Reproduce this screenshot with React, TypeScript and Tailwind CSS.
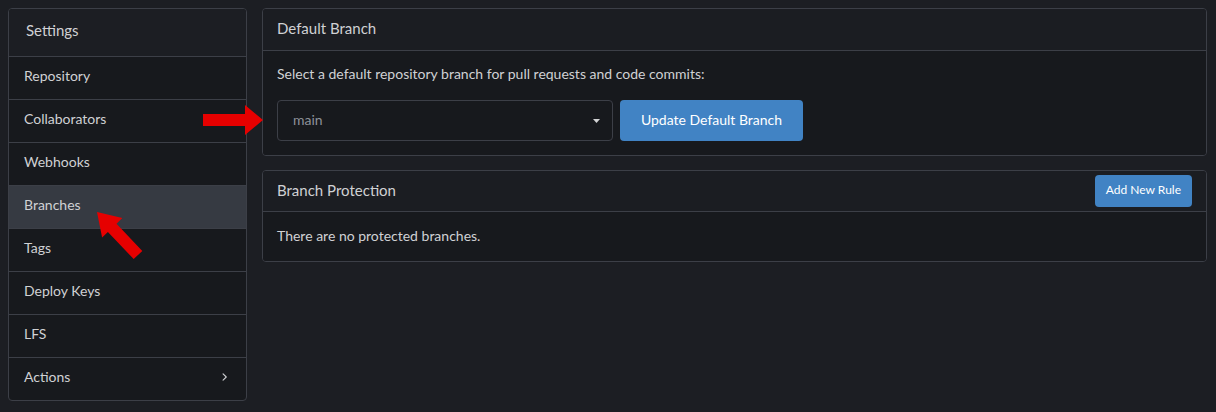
import React from 'react';

const menu = ['Repository', 'Collaborators', 'Webhooks', 'Branches', 'Tags', 'Deploy Keys', 'LFS'];

function ChevronRight() {
  return (
    <svg width="12" height="12" viewBox="0 0 16 16" fill="currentColor">
      <path d="M6.22 3.22a.75.75 0 0 1 1.06 0l4.25 4.25a.75.75 0 0 1 0 1.06l-4.25 4.25a.75.75 0 0 1-1.06-1.06L9.94 8 6.22 4.28a.75.75 0 0 1 0-1.06Z" />
    </svg>
  );
}

export default function App() {
  return (
    <div
      className="relative min-h-[412px] bg-[#1c1e23] text-[#d0d1d4] flex items-start gap-[15px] pl-2 pt-2 pr-[9px]"
      style={{ fontFamily: 'Lato, "Noto Sans", sans-serif' }}
    >
      {/* Sidebar */}
      <div className="w-[239px] shrink-0 border border-[#3c3f47] rounded-[4px] overflow-hidden bg-[#17191d]">
        <div className="h-[47px] flex items-center pl-[17px] pb-[4px] text-[15px] bg-[#1c1e23]">Settings</div>
        {menu.map(item => (
          <div
            key={item}
            className={
              'h-[43px] border-t border-[#3c3f47] flex items-center pl-[15px] pb-[5px] text-[14px] ' +
              (item === 'Branches' ? 'bg-[#363a42]' : '')
            }
          >
            {item}
          </div>
        ))}
        <div className="h-[43px] border-t border-[#3c3f47] flex items-center justify-between pl-[15px] pr-[16px] pb-[5px] text-[14px]">
          Actions
          <ChevronRight />
        </div>
      </div>

      {/* Content */}
      <div className="flex-1 flex flex-col gap-[14px]">
        <div className="border border-[#3c3f47] rounded-[4px] overflow-hidden">
          <div className="h-[42px] flex items-center px-[14px] pb-[2px] text-[15px] bg-[#1b1d22] border-b border-[#3c3f47]">
            Default Branch
          </div>
          <div className="bg-[#17191d] px-[14px] pt-[13px] pb-[14px]">
            <div className="text-[14px] leading-5">Select a default repository branch for pull requests and code commits:</div>
            <div className="flex gap-[7px] mt-[16px]">
              <div className="w-[336px] h-[41px] border border-[#3c3f47] rounded-[4px] flex items-center justify-between pl-[15px] pr-[12px] pb-[3px] text-[14px] text-[#8d9199] bg-[#17191d]">
                main
                <svg width="7" height="4" viewBox="0 0 7 4" fill="#d2d3d5" className="mt-[3px]">
                  <path d="M0 0h7L3.5 4z" />
                </svg>
              </div>
              <button className="h-[41px] w-[183px] rounded-[4px] bg-[#4183c4] text-white text-[14px] pb-[3px]">
                Update Default Branch
              </button>
            </div>
          </div>
        </div>

        <div className="border border-[#3c3f47] rounded-[4px] overflow-hidden">
          <div className="h-[41px] flex items-center justify-between pl-[14px] pr-[14px] text-[15px] bg-[#1b1d22] border-b border-[#3c3f47]">
            <span className="mb-[2px]">Branch Protection</span>
            <button className="h-[32px] px-[11px] pb-[2px] rounded-[4px] bg-[#4183c4] text-white text-[12px]">Add New Rule</button>
          </div>
          <div className="bg-[#17191d] h-[49px] flex items-center px-[14px] pb-[2px] text-[14px]">
            There are no protected branches.
          </div>
        </div>
      </div>

      {/* Annotation arrows */}
      <svg className="absolute left-0 top-0 pointer-events-none" width="1216" height="412">
        <polygon fill="#e60000" points="203,114 245,114 245,105 263,120 245,135 245,126 203,126" />
        <polygon
          fill="#e60000"
          points="97,212 122.3,218.1 116.5,223.7 142.3,250.9 133.7,259.1 107.9,231.9 102.1,237.5"
        />
      </svg>
    </div>
  );
}
